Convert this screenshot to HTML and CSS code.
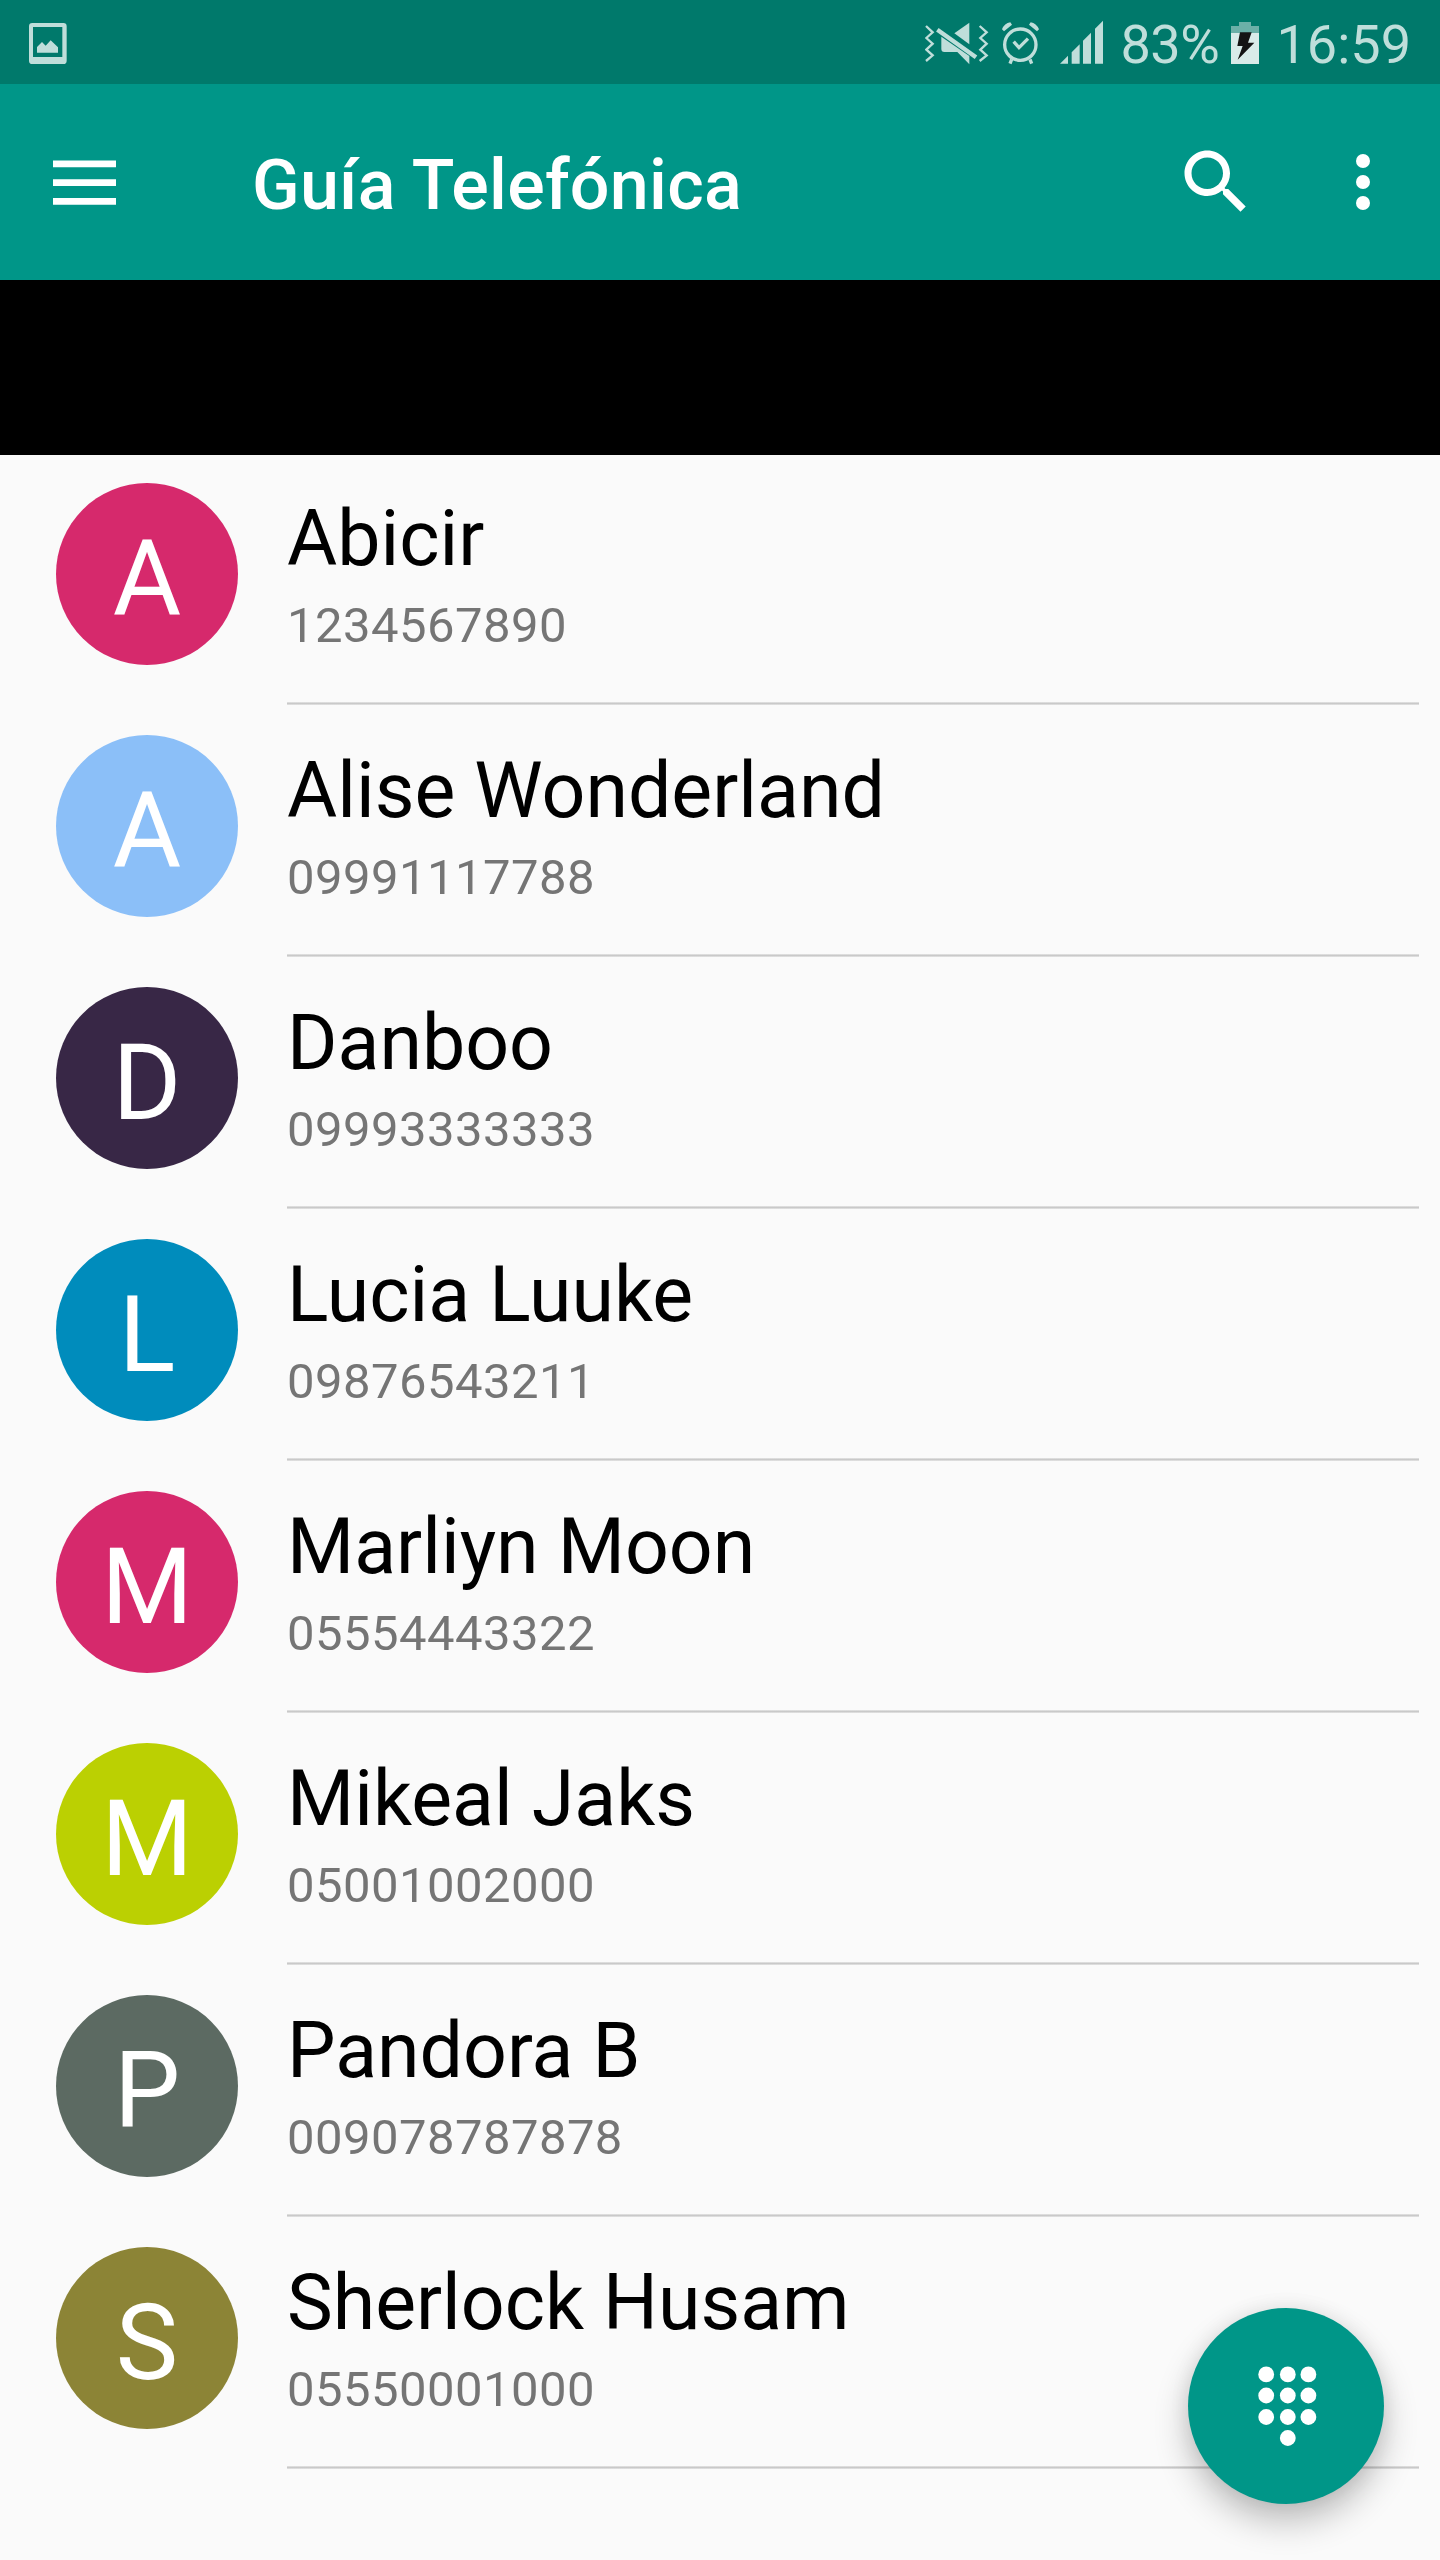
FILE: index.html
```html
<!DOCTYPE html>
<html lang="es">
<head>
    <meta charset="UTF-8">
    <meta name="viewport" content="width=device-width, initial-scale=1.0">
    <title>Guía Telefónica</title>
    <link rel="stylesheet" href="styles.css">
</head>
<body>
    <div class="status-bar">
        <svg class="icon-photo" width="40" height="45" viewBox="84 60 120 135">
            <path fill-rule="evenodd" d="M97 69H190Q200 69 200 79V182Q200 192 190 192H97Q87 192 87 182V79Q87 69 97 69ZM99 81V171H187V81Z"/>
            <path d="M111 158V141L126 126L137 137L152 121L174 142V158Z"/>
        </svg>
        <div class="status-right">
            <svg width="64" height="45" viewBox="75 60 192 135">
                <path class="line" d="M78 78L98 97L79 114L98 131L79 149L98 166L78 183M239 78L260 97L241 114L260 131L241 149L260 166L239 183"/>
                <path d="M208 68V133L163 100Z"/>
                <path d="M124 110L208 168V193L172 156H133Q124 156 124 147Z"/>
                <path class="slash" d="M112 89L228 172"/>
            </svg>
            <svg class="icon-alarm" width="39" height="45" viewBox="303 60 117 135">
                <circle class="ring" cx="361" cy="134" r="47"/>
                <path class="ring" d="M341 125L357 143L384 116"/>
                <path d="M306 88Q313 70 331 67L336 74L312 94ZM417 88Q409 70 392 67L387 74L411 94Z"/>
                <path class="ring" d="M335 178L330 191M390 178L395 191"/>
            </svg>
            <svg class="icon-signal" width="43" height="45" viewBox="480 60 129 135">
                <path d="M480 191L504 167V191ZM515 191V157L539 133V191ZM549 191V122L573 98V191ZM585 191V86L609 62V191Z"/>
            </svg>
            <span class="battery-text">83%</span>
            <svg width="28" height="45" viewBox="393 60 84 135">
                <path class="battery-empty" d="M393 78H417V66H453V78H477V99H393Z"/>
                <path class="battery-full" d="M393 99H477V192H393Z"/>
                <path class="bolt" d="M420 97H455L444 128H463L413 179L428 138H412Z"/>
            </svg>
            <span class="clock">16:59</span>
        </div>
    </div>

    <div class="app-bar">
        <svg class="white" width="84" height="84" viewBox="0 0 84 84">
            <path d="M11 20.4H74V27.2H11ZM11 39.2H74V46H11ZM11 58H74V64.8H11Z"/>
        </svg>
        <h1>Guía Telefónica</h1>
        <svg class="white" width="84" height="84" viewBox="0 0 24 24">
            <path d="M15.5 14h-.79l-.28-.27C15.41 12.59 16 11.11 16 9.5 16 5.91 13.09 3 9.5 3S3 5.91 3 9.5 5.91 16 9.5 16c1.61 0 3.09-.59 4.23-1.57l.27.28v.79l5 4.99L20.49 19l-4.99-5zm-6 0C7.01 14 5 11.99 5 9.5S7.01 5 9.5 5 14 7.01 14 9.5 11.99 14 9.5 14z"/>
        </svg>
        <svg class="white icon-more" width="84" height="84" viewBox="0 0 24 24">
            <circle cx="12" cy="6" r="2"/>
            <circle cx="12" cy="12" r="2"/>
            <circle cx="12" cy="18" r="2"/>
        </svg>
    </div>

    <div class="banner"></div>

    <div class="contacts">
        <div class="contact">
            <div class="avatar pink">A</div>
            <div class="info">
                <p class="name">Abicir</p>
                <p class="phone">1234567890</p>
            </div>
        </div>
        <div class="contact">
            <div class="avatar light-blue">A</div>
            <div class="info">
                <p class="name">Alise Wonderland</p>
                <p class="phone">09991117788</p>
            </div>
        </div>
        <div class="contact">
            <div class="avatar purple">D</div>
            <div class="info">
                <p class="name">Danboo</p>
                <p class="phone">09993333333</p>
            </div>
        </div>
        <div class="contact">
            <div class="avatar blue">L</div>
            <div class="info">
                <p class="name">Lucia Luuke</p>
                <p class="phone">09876543211</p>
            </div>
        </div>
        <div class="contact">
            <div class="avatar pink">M</div>
            <div class="info">
                <p class="name">Marliyn Moon</p>
                <p class="phone">05554443322</p>
            </div>
        </div>
        <div class="contact">
            <div class="avatar lime">M</div>
            <div class="info">
                <p class="name">Mikeal Jaks</p>
                <p class="phone">05001002000</p>
            </div>
        </div>
        <div class="contact">
            <div class="avatar gray">P</div>
            <div class="info">
                <p class="name">Pandora B</p>
                <p class="phone">009078787878</p>
            </div>
        </div>
        <div class="contact">
            <div class="avatar olive">S</div>
            <div class="info">
                <p class="name">Sherlock Husam</p>
                <p class="phone">05550001000</p>
            </div>
        </div>
    </div>

    <div class="fab">
        <svg class="white" width="196" height="196" viewBox="0 0 196 196">
            <circle cx="78.2" cy="66.4" r="7.9"/>
            <circle cx="99.8" cy="66.4" r="7.9"/>
            <circle cx="120.4" cy="66.4" r="7.9"/>
            <circle cx="78.2" cy="87.5" r="7.9"/>
            <circle cx="99.8" cy="87.5" r="7.9"/>
            <circle cx="120.4" cy="87.5" r="7.9"/>
            <circle cx="78.2" cy="109" r="7.9"/>
            <circle cx="99.8" cy="109" r="7.9"/>
            <circle cx="120.4" cy="109" r="7.9"/>
            <circle cx="99.8" cy="130" r="7.9"/>
        </svg>
    </div>
</body>
</html>
```
FILE: styles.css
```css
* {
    box-sizing: border-box;
}
body {
    font-family: Roboto, sans-serif;
    background-color: #fafafa;
    color: #000;
    margin: 0;
    height: 2560px;
    overflow: hidden;
}
svg {
    display: block;
    flex: none;
}
.white {
    fill: white;
}

/* status bar */
.status-bar {
    display: flex;
    justify-content: space-between;
    height: 84px;
    padding: 0 29px 0 28px;
    background-color: #00796b;
    color: #bfdeda;
    fill: #bfdeda;
    font-size: 54px;
    line-height: 89px;
}
.status-bar svg {
    margin-top: 20px;
}
.status-right {
    display: flex;
}
.line {
    fill: none;
    stroke: #bfdeda;
    stroke-width: 7;
}
.slash {
    stroke: #bfdeda;
    stroke-width: 13;
}
.ring {
    fill: none;
    stroke: #bfdeda;
    stroke-width: 10;
}
.icon-alarm {
    margin-left: 12px;
}
.icon-signal {
    margin-left: 20px;
}
.battery-text {
    width: 110px;
    margin-left: 18px;
    letter-spacing: -0.5px;
}
.battery-empty {
    fill: #6bb0a8;
}
.battery-full {
    fill: #d9ebe9;
}
.bolt {
    fill: #141414;
}
.clock {
    margin-left: 18px;
}

/* app bar */
.app-bar {
    display: flex;
    align-items: center;
    height: 196px;
    padding: 0 35px 0 42px;
    background-color: #009688;
}
.app-bar h1 {
    flex: 1;
    margin: 0 0 0 126px;
    color: white;
    font-size: 70px;
    font-weight: 500;
    line-height: 90px;
    letter-spacing: 0.25px;
    padding-top: 6px;
}
.icon-more {
    margin-left: 63px;
}
.banner {
    height: 175px;
    background-color: black;
}

/* contact list */
.contact {
    display: flex;
    height: 252px;
    padding: 0 21px 0 56px;
}
.avatar {
    width: 182px;
    height: 182px;
    margin: 28px 49px 0 0;
    border-radius: 50%;
    color: white;
    font-size: 105px;
    line-height: 194px;
    text-align: center;
}
.info {
    flex: 1;
    height: 250px;
    padding-top: 39px;
    background: linear-gradient(#e6e6e6, #c9c9c9 50%, #e6e6e6) bottom / 100% 3px no-repeat;
}
.name {
    margin: 0;
    font-size: 77px;
    line-height: 90px;
}
.phone {
    margin: 13px 0 0;
    color: #757575;
    font-size: 49px;
    line-height: 58px;
    letter-spacing: 0.45px;
}
.pink {
    background-color: #d6296c;
}
.light-blue {
    background-color: #8bbff8;
}
.purple {
    background-color: #382746;
}
.blue {
    background-color: #008cbc;
}
.lime {
    background-color: #bbd002;
}
.gray {
    background-color: #5c6a62;
}
.olive {
    background-color: #8c8436;
}

/* dialpad button */
.fab {
    position: absolute;
    right: 56px;
    top: 2308px;
    width: 196px;
    height: 196px;
    border-radius: 50%;
    background-color: #009688;
    box-shadow: 0 18px 34px rgba(0, 0, 0, 0.24), 0 0 20px rgba(0, 0, 0, 0.08);
}
```
